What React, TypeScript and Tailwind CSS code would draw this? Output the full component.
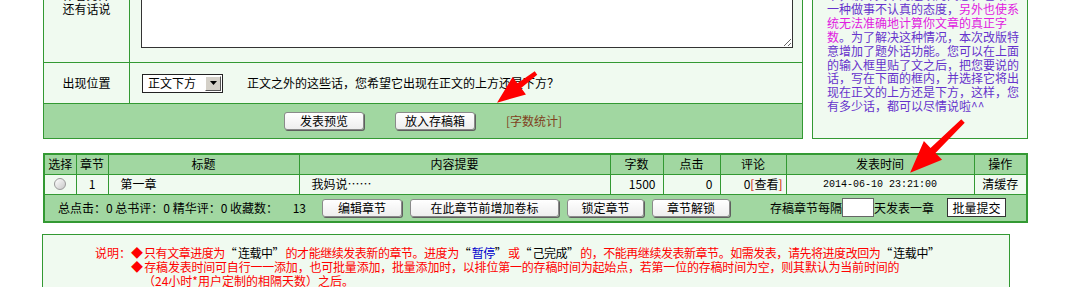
import React from "react";

const cjk = "font-['Noto_Sans_CJK_SC',sans-serif]";

function Btn({ children, className = "" }: { children: React.ReactNode; className?: string }) {
  return (
    <button
      className={
        "flex h-[18px] items-center justify-center rounded-[3px] border border-[#8a8a8a] bg-linear-to-b from-white to-[#eeeeee] text-[12px] leading-none text-black shadow-[1px_1px_0_#5f5f5f] " +
        className
      }
    >
      {children}
    </button>
  );
}

// full-width quote marks, fixed to one em like the bitmap font in the shot
function Lq() {
  return <span className="inline-block w-[12px] text-right">“</span>;
}
function Rq() {
  return <span className="inline-block w-[12px] text-left">”</span>;
}
function Dot() {
  return <span className="inline-block w-[12px] text-center">◆</span>;
}

function FormPanel() {
  return (
    <div className="w-[760px] border border-[#339933] bg-[#f0faf0]">
      <div className="flex h-[102px] border-b border-[#339933]">
        <div className="flex w-[86px] flex-col items-center justify-center border-r border-[#339933] pb-[19px] leading-[14px]">
          <span>作者另外</span>
          <span>还有话说</span>
        </div>
        <div className="flex flex-1 pt-[10px] pb-[14px] pl-[11px] pr-[9px]">
          <textarea className="h-full w-full border border-[#333] bg-white" />
        </div>
      </div>
      <div className="flex h-[41px] border-b border-[#339933]">
        <div className="flex w-[86px] items-center justify-center border-r border-[#339933]">出现位置</div>
        <div className="flex flex-1 items-center pl-[12px]">
          <div className="flex h-[19px] w-[81px] items-center justify-between border border-[#222] bg-white pl-[5px] pr-[1px]">
            <span className="leading-none">正文下方</span>
            <span className="flex h-[15px] w-[16px] items-center justify-center border border-t-white border-l-white border-r-[#555] border-b-[#555] bg-[#d4d0c8]">
              <svg width="7" height="4" viewBox="0 0 7 4">
                <polygon points="0,0 7,0 3.5,4" fill="#000" />
              </svg>
            </span>
          </div>
          <span className="ml-[24px]">正文之外的这些话，您希望它出现在正文的上方还是下方？</span>
        </div>
      </div>
      <div className="flex h-[34px] items-center justify-center gap-[31px] bg-[#a1d7a1]">
        <Btn className="w-[80px]">发表预览</Btn>
        <Btn className="w-[80px]">放入存稿箱</Btn>
        <span className="text-[#804020]">[字数统计]</span>
      </div>
    </div>
  );
}

function RightPanel() {
  return (
    <div className="ml-[9px] w-[216px] border border-[#339933] bg-[#f0faf0] pt-[27px] pl-[14px] leading-[13.9px] text-[#6633cc]">
      <div>下，破坏文章的连续的阅感，也给人</div>
      <div>
        一种做事不认真的态度，<span className="text-[#e020e0]">另外也使系</span>
      </div>
      <div className="text-[#e020e0]">统无法准确地计算你文章的真正字</div>
      <div>
        <span className="text-[#e020e0]">数</span>。为了解决这种情况，本次改版特
      </div>
      <div>意增加了题外话功能。您可以在上面</div>
      <div>的输入框里贴了文之后，把您要说的</div>
      <div>话，写在下面的框内，并选择它将出</div>
      <div>现在正文的上方还是下方，这样，您</div>
      <div>有多少话，都可以尽情说啦^^</div>
    </div>
  );
}

function ChapterTable() {
  const th = "h-[20px] border border-[#339933] p-0 text-center font-normal";
  const td = "h-[20px] border border-[#339933] p-0";
  return (
    <table className="mt-[14px] ml-[43px] w-[983px] table-fixed border-collapse border-2 border-[#339933]">
      <colgroup>
        <col className="w-[32px]" />
        <col className="w-[32px]" />
        <col className="w-[191px]" />
        <col className="w-[311px]" />
        <col className="w-[53px]" />
        <col className="w-[57px]" />
        <col className="w-[66px]" />
        <col className="w-[188px]" />
        <col className="w-[53px]" />
      </colgroup>
      <thead>
        <tr className="bg-[#a1d7a1]">
          <th className={th}>选择</th>
          <th className={th}>章节</th>
          <th className={th}>标题</th>
          <th className={th}>内容提要</th>
          <th className={th}>字数</th>
          <th className={th}>点击</th>
          <th className={th}>评论</th>
          <th className={th}>发表时间</th>
          <th className={th}>操作</th>
        </tr>
      </thead>
      <tbody>
        <tr className="bg-[#f0faf0]">
          <td className={td}>
            <div className="mx-auto h-[12px] w-[12px] rounded-full border border-[#9a9a9a] bg-linear-to-br from-white to-[#c8c8c8]" />
          </td>
          <td className={td + " text-center"}>1</td>
          <td className={td + " pl-[12px]"}>第一章</td>
          <td className={td + " pl-[12px]"}>我妈说……</td>
          <td className={td + " pr-[7px] text-right"}>1500</td>
          <td className={td + " pr-[7px] text-right"}>0</td>
          <td className={td + " pr-[3px] text-right"}>
            0<span className="text-[#cc0000]">[</span>查看<span className="text-[#cc0000]">]</span>
          </td>
          <td className={td + " text-center font-['Liberation_Mono',monospace] text-[10px]"}>2014-06-10 23:21:00</td>
          <td className={td + " text-center"}>清缓存</td>
        </tr>
        <tr className="bg-[#a1d7a1]">
          <td colSpan={9} className="h-[28px] border border-[#339933] p-0">
            <div className="flex items-center pl-[13px]">
              <span className="flex w-[248px] shrink-0 justify-between">
                <span>总点击：0 总书评：0 精华评：0 收藏数：</span>
                <span>13</span>
              </span>
              <Btn className="ml-[16px] w-[80px]">编辑章节</Btn>
              <Btn className="ml-[8px] w-[149px]">在此章节前增加卷标</Btn>
              <Btn className="ml-[8px] w-[77px]">锁定章节</Btn>
              <Btn className="ml-[8px] w-[78px]">章节解锁</Btn>
              <span className="ml-[40px]">存稿章节每隔</span>
              <span className="h-[19px] w-[32px] border border-[#666] bg-white" />
              <span>天发表一章</span>
              <button className="ml-[13px] flex h-[19px] w-[59px] items-center justify-center border border-[#333] bg-white text-[12px] leading-none">
                批量提交
              </button>
            </div>
          </td>
        </tr>
      </tbody>
    </table>
  );
}

function Note() {
  const red = "text-[#ff0000]";
  return (
    <div className="mt-[11px] ml-[42px] h-[80px] w-[968px] border border-[#339933] bg-[#f0faf0] pt-[11px] pl-[52px] leading-[14px]">
      <div className="flex">
        <span className={red + " w-[36px] shrink-0"}>说明：</span>
        <div className={red}>
          <div className="w-[809px] text-justify tracking-[-1.5px] [text-align-last:justify]">
            <Dot />只有文章进度为
            <span className="text-black">
              <Lq />连载中<Rq />
            </span>
            的才能继续发表新的章节。进度为
            <span className="text-black">
              <Lq />
            </span>
            <span className="text-[#0000cc]">暂停</span>
            <span className="text-black">
              <Rq />
            </span>
            或
            <span className="text-black">
              <Lq />己完成<Rq />
            </span>
            的，不能再继续发表新章节。如需发表，请先将进度改回为
            <span className="text-black">
              <Lq />连载中<Rq />
            </span>
          </div>
          <div className="w-[767px] text-justify tracking-[-1.5px] [text-align-last:justify]">
            <Dot />存稿发表时间可自行一一添加，也可批量添加，批量添加时，以排位第一的存稿时间为起始点，若第一位的存稿时间为空，则其默认为当前时间的
          </div>
          <div className="whitespace-nowrap pl-[12px]">（24小时*用户定制的相隔天数）之后。</div>
        </div>
      </div>
    </div>
  );
}

function Arrow({ x, y, angle, len, head, half, shaft }: { x: number; y: number; angle: number; len: number; head: number; half: number; shaft: number }) {
  const b = len - head;
  const pts = `0,${-shaft * 0.7} ${b},${-shaft} ${b},${-half} ${len},0 ${b},${half} ${b},${shaft} 0,${shaft * 0.7}`;
  return (
    <g transform={`translate(${x} ${y}) rotate(${angle})`}>
      <polygon points={pts} fill="#ff0000" />
    </g>
  );
}

export default function App() {
  return (
    <div className={"relative h-[287px] w-[1082px] overflow-hidden bg-white text-[12px] text-black " + cjk}>
      <div className="-mt-[40px] flex items-stretch pl-[43px]">
        <FormPanel />
        <RightPanel />
      </div>
      <ChapterTable />
      <Note />
      <svg className="pointer-events-none absolute inset-0" width="1082" height="287">
        <Arrow x={536} y={73} angle={142.7} len={49} head={28} half={11} shaft={3} />
        <Arrow x={963} y={121} angle={135.6} len={74} head={32} half={13} shaft={3.5} />
      </svg>
    </div>
  );
}
